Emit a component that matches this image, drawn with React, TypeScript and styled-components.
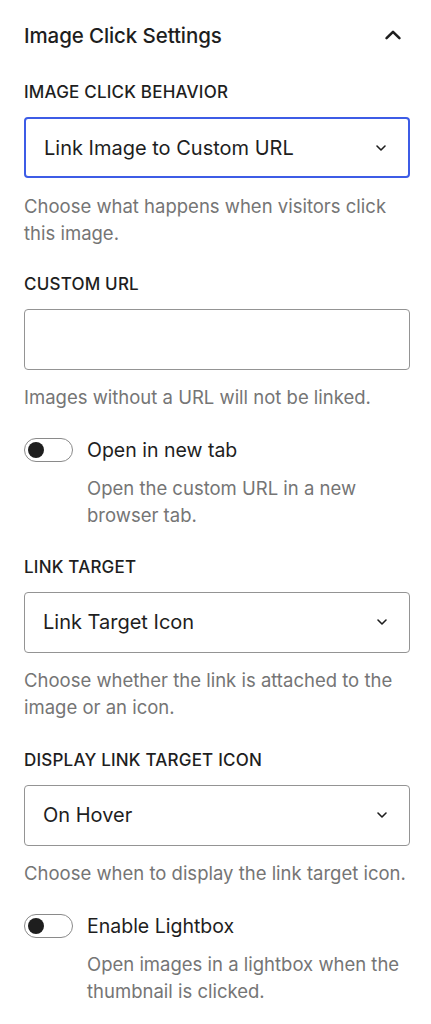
import * as React from 'react';
import styled, { createGlobalStyle } from 'styled-components'

const GlobalStyle = createGlobalStyle`
body {
  margin: 0;
  background: #fff;
  font-family: Inter, "Noto Sans", sans-serif;
  color: #1e1e1e;
}
`

const Panel = styled.div`
width: 431px;
box-sizing: border-box;
padding: 20px 21px 0 24px;
`

const PanelHeader = styled.div`
display: flex;
align-items: center;
justify-content: space-between;
height: 30px;
padding-right: 8px;
margin-bottom: 32px;
`

const PanelTitle = styled.h2`
margin: 0;
font-size: 20.5px;
font-weight: 500;
letter-spacing: -0.1px;
`

const Field = styled.div<{ $gap?: number }>`
display: flex;
flex-direction: column;
margin-bottom: ${p => p.$gap ?? 27}px;
`

const Label = styled.label`
font-size: 17px;
font-weight: 500;
text-transform: uppercase;
letter-spacing: 0.2px;
line-height: 20px;
margin-bottom: 15px;
`

const Box = styled.div<{ $focused?: boolean }>`
display: flex;
align-items: center;
justify-content: space-between;
height: 61px;
box-sizing: border-box;
padding: 0 20px 0 18px;
border: ${p => p.$focused ? '2px solid #3d5ce6' : '1px solid #949494'};
border-radius: 4px;
font-size: 20px;
`

const Help = styled.p<{ $indent?: boolean }>`
margin: ${p => p.$indent ? '12.5px' : '14.5px'} 0 0;
padding-left: ${p => p.$indent ? '63px' : '0'};
font-size: 18.5px;
line-height: 27px;
color: #757575;
`

const ToggleRow = styled.div`
display: flex;
align-items: center;
gap: 14px;
height: 26px;
`

const Track = styled.span`
display: flex;
align-items: center;
width: 49px;
height: 24px;
box-sizing: border-box;
border: 1.5px solid #8a8a8a;
border-radius: 12px;
padding-left: 3px;
`

const Thumb = styled.span`
width: 16px;
height: 16px;
border-radius: 50%;
background: #1e1e1e;
`

const ToggleLabel = styled.span`
font-size: 19.5px;
`

const Chevron = ({ up, size = 14 }: { up?: boolean; size?: number }) => (
  <svg width={size} height={size} viewBox="0 0 14 14" fill="none">
    <path d={up ? 'M2 9.5 L7 4.5 L12 9.5' : 'M3 5 L7 9 L11 5'} stroke="#1e1e1e" strokeWidth={up ? 2 : 1.6} strokeLinecap="round" strokeLinejoin="round" />
  </svg>
)

const Select: React.FC<{ value: string; focused?: boolean }> = ({ value, focused }) => (
  <Box $focused={focused}>
    <span>{value}</span>
    <Chevron size={14} />
  </Box>
)

const Toggle: React.FC<{ label: string; help: string }> = ({ label, help }) => (
  <Field $gap={27.5}>
    <ToggleRow>
      <Track><Thumb /></Track>
      <ToggleLabel>{label}</ToggleLabel>
    </ToggleRow>
    <Help $indent>{help}</Help>
  </Field>
)

const App: React.FC = () => (
  <>
    <GlobalStyle />
    <Panel>
      <PanelHeader>
        <PanelTitle>Image Click Settings</PanelTitle>
        <Chevron up size={18} />
      </PanelHeader>
      <Field>
        <Label>Image click behavior</Label>
        <Select value="Link Image to Custom URL" focused />
        <Help>Choose what happens when visitors click this image.</Help>
      </Field>
      <Field $gap={25.5}>
        <Label>Custom URL</Label>
        <Box />
        <Help>Images without a URL will not be linked.</Help>
      </Field>
      <Toggle label="Open in new tab" help="Open the custom URL in a new browser tab." />
      <Field $gap={28.5}>
        <Label>Link target</Label>
        <Select value="Link Target Icon" />
        <Help>Choose whether the link is attached to the image or an icon.</Help>
      </Field>
      <Field $gap={25.5}>
        <Label>Display link target icon</Label>
        <Select value="On Hover" />
        <Help>Choose when to display the link target icon.</Help>
      </Field>
      <Toggle label="Enable Lightbox" help="Open images in a lightbox when the thumbnail is clicked." />
    </Panel>
  </>
)

export default App
